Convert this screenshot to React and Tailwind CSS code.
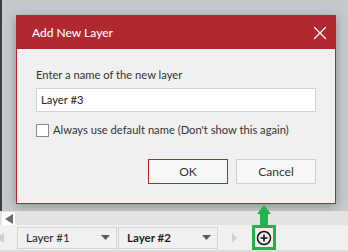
import { X } from "lucide-react";

// Small triangle used by the scroll buttons and tab dropdowns
function Tri({ dir, className }) {
  const points = {
    left: "8,0 8,10 0,5",
    right: "0,0 0,10 5,5",
    down: "0,0 9,0 4.5,5",
  };
  const size = { left: [8, 10], right: [5, 10], down: [9, 5] }[dir];
  return (
    <svg width={size[0]} height={size[1]} viewBox={`0 0 ${size[0]} ${size[1]}`} className={className}>
      <polygon points={points[dir]} fill="currentColor" />
    </svg>
  );
}

function LayerTab({ label, bold }) {
  return (
    <div className="w-[100px] h-[22px] border border-[#d4d4d4] flex items-center pl-[8px] pr-[6px]">
      <span className={`flex-1 text-[11.5px] text-[#1e1e1e] ${bold ? "font-bold" : ""}`}>{label}</span>
      <Tri dir="down" className="text-[#5a5a5a]" />
    </div>
  );
}

export default function App() {
  return (
    <div className="relative w-[348px] h-[252px] overflow-hidden bg-[#f0f0f0] font-['Lato',sans-serif]">
      {/* canvas area with the modal */}
      <div className="h-[211px] bg-[#c7cacd] border-l-2 border-[#3f3f3f] pl-[14px] pt-[15px]">
        <div className="w-[320px] h-[189px] border border-[#b1282f] bg-[#f0f0f0] flex flex-col shadow-[0_2px_10px_rgba(0,0,0,0.3)]">
          <div className="h-[33px] bg-[#b1282f] flex items-center justify-between pl-[15px] pr-[4px]">
            <span className="text-white text-[12px] font-medium">Add New Layer</span>
            <X size={22} strokeWidth={1.3} className="text-white" />
          </div>
          <div className="flex flex-col px-[19px] pt-[18px]">
            <span className="text-[11.2px] leading-[16px] text-[#333] whitespace-nowrap">Enter a name of the new layer</span>
            <div className="mt-[5px] h-[24px] bg-white border border-[#cfd0d8] flex items-center pl-[4px]">
              <span className="text-[11.2px] text-[#222]">Layer #3</span>
            </div>
            <div className="mt-[11px] flex items-center gap-[4px]">
              <div className="w-[13px] h-[13px] bg-white border border-[#8a8a8a]" />
              <span className="text-[11.2px] leading-[14px] text-[#333] whitespace-nowrap">Always use default name (Don't show this again)</span>
            </div>
            <div className="mt-[22px] flex justify-end gap-[8px]">
              <div className="w-[80px] h-[25px] border border-[#b1282f] bg-[#f7f7f7] flex items-center justify-center text-[12px] text-[#333]">OK</div>
              <div className="w-[80px] h-[25px] border border-[#cfcfcf] bg-[#f7f7f7] flex items-center justify-center text-[12px] text-[#333]">Cancel</div>
            </div>
          </div>
        </div>
      </div>

      {/* horizontal scroll strip */}
      <div className="h-[14px] bg-[#e3e3e3] pl-[2px] pt-[1px]">
        <div className="w-[13px] h-[13px] bg-white flex items-center justify-center">
          <Tri dir="left" className="text-[#6b6b6b]" />
        </div>
      </div>

      {/* layer tabs */}
      <div className="h-[25px] flex items-center">
        <div className="w-[17px] flex items-center">
          <Tri dir="left" className="text-[#cfcfcf] -ml-[4px]" />
        </div>
        <div className="flex gap-[1px]">
          <LayerTab label="Layer #1" />
          <LayerTab label="Layer #2" bold />
        </div>
        <div className="ml-[14px] w-[20px]">
          <Tri dir="right" className="text-[#cfcfcf]" />
        </div>
        <div className="w-[24px] h-[25px] border-[3px] border-[#22b14c] flex items-center justify-center">
          <svg width="16" height="16" viewBox="0 0 16 16">
            <circle cx="8" cy="8" r="6.5" fill="none" stroke="#111" strokeWidth="1.5" />
            <path d="M8 4.5v7M4.5 8h7" stroke="#111" strokeWidth="1.6" />
          </svg>
        </div>
      </div>
      <div className="h-[2px] bg-[#dcdcdc]" />

      {/* green arrow pointing to the add button */}
      <svg className="absolute left-[257px] top-[205px]" width="14" height="20" viewBox="0 0 14 20">
        <polygon points="7,0 14,9 11,9 11,20 3,20 3,9 0,9" fill="#22b14c" />
      </svg>
    </div>
  );
}
